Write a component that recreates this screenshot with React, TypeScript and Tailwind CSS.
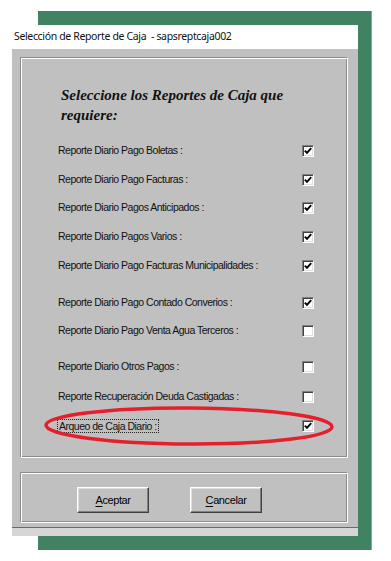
import React from "react";

const rows: { label: string; checked: boolean; mt: string }[] = [
  { label: "Reporte Diario Pago Boletas :", checked: true, mt: "mt-[19px]" },
  { label: "Reporte Diario Pago Facturas :", checked: true, mt: "mt-[15px]" },
  { label: "Reporte Diario Pagos Anticipados :", checked: true, mt: "mt-[14px]" },
  { label: "Reporte Diario Pagos Varios :", checked: true, mt: "mt-[15px]" },
  { label: "Reporte Diario Pago Facturas Municipalidades :", checked: true, mt: "mt-[15px]" },
  { label: "Reporte Diario Pago Contado Converios :", checked: true, mt: "mt-[23px]" },
  { label: "Reporte Diario Pago Venta Agua Terceros :", checked: false, mt: "mt-[14px]" },
  { label: "Reporte Diario Otros Pagos :", checked: false, mt: "mt-[22px]" },
  { label: "Reporte Recuperación Deuda Castigadas :", checked: false, mt: "mt-[16px]" },
];

function Check({ checked }: { checked: boolean }) {
  return (
    <div className="w-[12px] h-[12px] bg-white border-t border-l border-t-[#808080] border-l-[#808080] border-b border-r border-b-white border-r-white shadow-[inset_1px_1px_0_#404040,inset_-1px_-1px_0_#dfdfdf] flex items-center justify-center">
      {checked && (
        <svg width="8" height="8" viewBox="0 0 8 8">
          <path d="M0.8 3.6 L3 5.9 L7.2 1.2" fill="none" stroke="#000" strokeWidth="1.9" />
        </svg>
      )}
    </div>
  );
}

function Btn({ first, rest }: { first: string; rest: string }) {
  return (
    <div className="w-[72px] h-[26px] bg-[#c0c0c0] border border-t-white border-l-white border-r-[#404040] border-b-[#404040] shadow-[inset_-1px_-1px_0_#808080,inset_1px_1px_0_#dfdfdf] flex items-center justify-center text-[11px] tracking-[-0.4px] text-black font-['Liberation_Sans',Arial,sans-serif]">
      <span className="underline underline-offset-[2px]">{first}</span>
      <span>{rest}</span>
    </div>
  );
}

export default function App() {
  return (
    <div className="relative w-[391px] h-[561px] bg-white overflow-hidden font-['Liberation_Sans',Arial,sans-serif]">
      {/* desktop shadow */}
      <div className="absolute left-[38px] top-[11px] w-[334px] h-[539px] bg-[#418262] border-r border-r-[#78b094]" />
      {/* window */}
      <div className="absolute left-[12px] top-[25px] w-[346px] h-[511px] flex flex-col">
        <div className="h-[24px] bg-white flex items-center pl-[2px] text-[10.5px] tracking-[-0.35px] text-[#111] font-['Noto_Sans',sans-serif]">
          Selección de Reporte de Caja&nbsp;&nbsp;- sapsreptcaja002
        </div>
        <div className="flex-1 bg-[#c0c0c0] flex flex-col px-[8px] pt-[8px] pr-[10px]">
          <div className="h-[401px] border border-t-[#8c8c8c] border-l-[#8c8c8c] border-r-white border-b-white shadow-[inset_1px_1px_0_#fff,inset_-1px_-1px_0_#8c8c8c] flex flex-col">
            <div className="mt-[27px] pl-[40px] text-[15px] leading-[20px] font-bold italic text-[#111] font-['Liberation_Serif','Times_New_Roman',serif]">
              Seleccione los Reportes de Caja que
              <br />
              requiere:
            </div>
            {rows.map((r) => (
              <div key={r.label} className={`${r.mt} h-[14px] flex items-center`}>
                <div className="w-[281px] pl-[37px] text-[10.5px] tracking-[-0.5px] text-[#111] whitespace-nowrap">
                  {r.label}
                </div>
                <Check checked={r.checked} />
              </div>
            ))}
            <div className="mt-[15px] h-[14px] flex items-center">
              <div className="w-[281px] pl-[36px] flex">
                <span className="border border-dotted border-[#222] px-[1px] text-[10.5px] leading-[12px] tracking-[-0.5px] text-[#111] whitespace-nowrap">
                  Arqueo de Caja Diario :
                </span>
              </div>
              <Check checked={true} />
            </div>
          </div>
          <div className="mt-[14px] h-[51px] border border-t-[#8c8c8c] border-l-[#8c8c8c] border-r-white border-b-white shadow-[inset_1px_1px_0_#fff,inset_-1px_-1px_0_#8c8c8c] flex items-start pt-[14px] pl-[56px] gap-[41px]">
            <Btn first="A" rest="ceptar" />
            <Btn first="C" rest="ancelar" />
          </div>
        </div>
        <div className="h-[1px] bg-[#6a6a6a]" />
        <div className="h-[8px] bg-[#d6d6d6]" />
      </div>
      {/* red annotation ellipse */}
      <svg className="absolute left-0 top-0" width="391" height="561" viewBox="0 0 391 561">
        <ellipse cx="189" cy="426" rx="143" ry="18" fill="none" stroke="#e3202c" strokeWidth="3.5" transform="rotate(0.3 189 426)" />
      </svg>
    </div>
  );
}
